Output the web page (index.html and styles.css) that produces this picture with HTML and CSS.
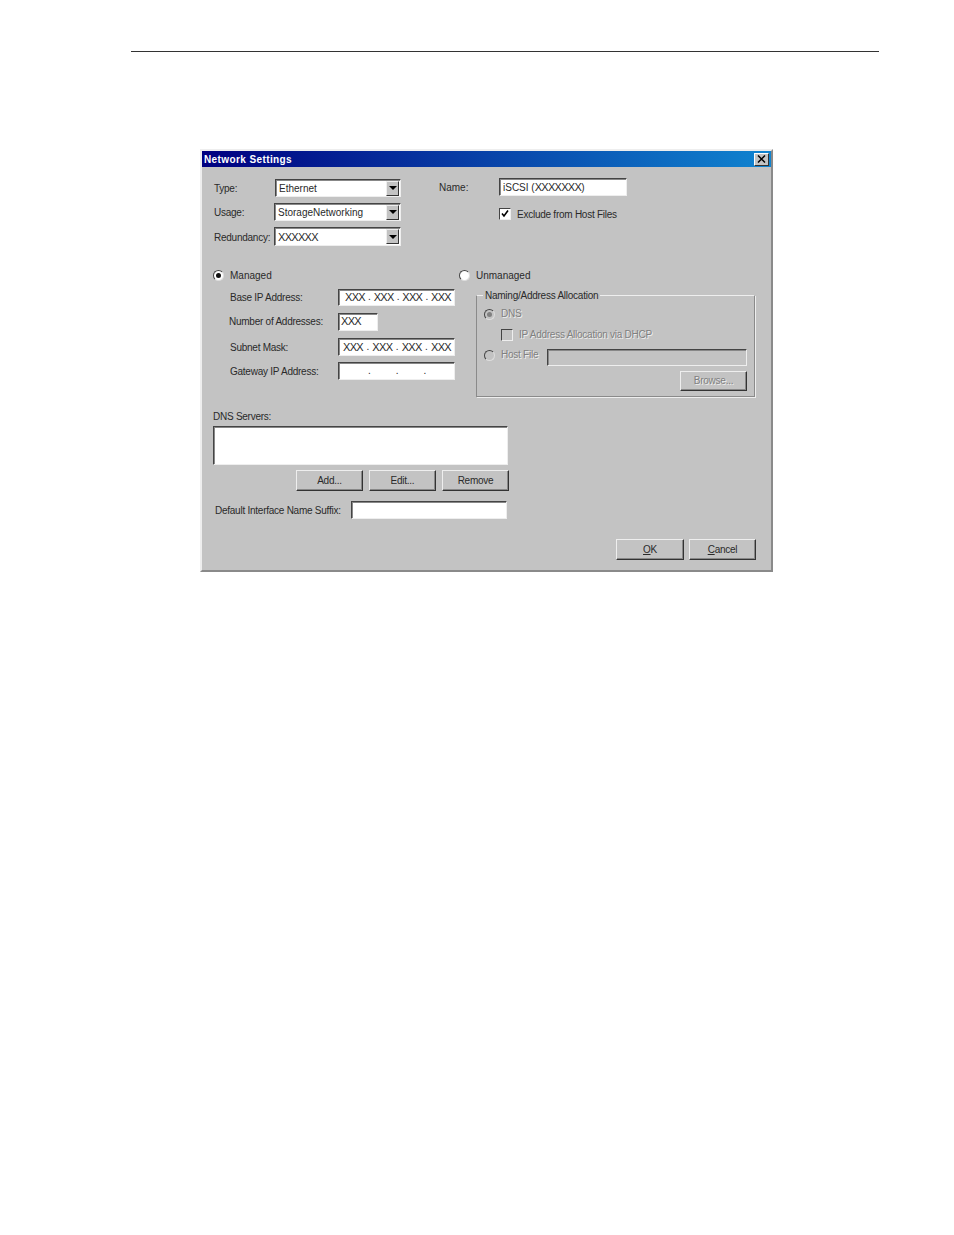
FILE: index.html
```html
<!DOCTYPE html>
<html lang="en">
<head>
    <meta charset="UTF-8">
    <title>Network Settings</title>
    <link rel="stylesheet" href="styles.css">
</head>
<body>
    <div class="page-rule"></div>

    <div class="dialog">
        <div class="titlebar">
            <span class="title">Network Settings</span>
            <span class="close">
                <svg width="9" height="8" viewBox="0 0 9 8"><path d="M1 0.5L8 7.5M8 0.5L1 7.5" fill="none" stroke="#000" stroke-width="1.5"/></svg>
            </span>
        </div>

        <div class="top">
            <div class="top-left">
                <div class="select-row">
                    <span class="select-label">Type:</span>
                    <div class="field select select-type"><span class="select-value">Ethernet</span><span class="arrow"></span></div>
                </div>
                <div class="select-row">
                    <span class="select-label">Usage:</span>
                    <div class="field select"><span class="select-value">StorageNetworking</span><span class="arrow"></span></div>
                </div>
                <div class="select-row select-row-tall">
                    <span class="select-label">Redundancy:</span>
                    <div class="field select"><span class="select-value masked">XXXXXX</span><span class="arrow"></span></div>
                </div>
            </div>
            <div class="top-right">
                <div class="name-row">
                    <span class="name-label">Name:</span>
                    <div class="field name-input">iSCSI (<span class="masked">XXXXXXX</span>)</div>
                </div>
                <div class="check-row">
                    <span class="checkbox">
                        <svg width="8" height="8" viewBox="0 0 8 8"><path d="M1 3.5L3 6 7 0.5" fill="none" stroke="#000" stroke-width="1.6"/></svg>
                    </span>
                    <span class="check-text">Exclude from Host Files</span>
                </div>
            </div>
        </div>

        <div class="mode-row">
            <div class="radio-item radio-managed"><span class="radio checked"></span><span class="mode-text">Managed</span></div>
            <div class="radio-item"><span class="radio"></span><span class="mode-text">Unmanaged</span></div>
        </div>

        <div class="middle">
            <div class="ip-fields">
                <div class="ip-row ip-base">
                    <span>Base IP Address:</span>
                    <div class="field ip-input ip-indent"><span class="masked">XXX</span><i>.</i><span class="masked">XXX</span><i>.</i><span class="masked">XXX</span><i>.</i><span class="masked">XXX</span></div>
                </div>
                <div class="ip-row ip-count">
                    <span>Number of Addresses:</span>
                    <div class="field count-input"><span class="masked">XXX</span></div>
                </div>
                <div class="ip-row ip-subnet">
                    <span>Subnet Mask:</span>
                    <div class="field ip-input"><span class="masked">XXX</span><i>.</i><span class="masked">XXX</span><i>.</i><span class="masked">XXX</span><i>.</i><span class="masked">XXX</span></div>
                </div>
                <div class="ip-row ip-gateway">
                    <span>Gateway IP Address:</span>
                    <div class="field ip-input ip-empty"><i>.</i><i>.</i><i>.</i></div>
                </div>
            </div>

            <fieldset class="group">
                <legend>Naming/Address Allocation</legend>
                <div class="radio-item disabled dns-row"><span class="radio checked"></span><span>DNS</span></div>
                <div class="dhcp-row disabled"><span class="checkbox"></span><span>IP Address Allocation via DHCP</span></div>
                <div class="host-row disabled">
                    <div class="radio-item"><span class="radio"></span><span>Host File</span></div>
                    <div class="field host-input"></div>
                </div>
                <div class="browse-row">
                    <div class="btn btn-disabled">Browse...</div>
                </div>
            </fieldset>
        </div>

        <div class="dns-label">DNS Servers:</div>
        <div class="field dns-list"></div>
        <div class="dns-buttons">
            <div class="btn">Add...</div>
            <div class="btn">Edit...</div>
            <div class="btn">Remove</div>
        </div>

        <div class="suffix-row">
            <span>Default Interface Name Suffix:</span>
            <div class="field suffix-input"></div>
        </div>

        <div class="dialog-buttons">
            <div class="btn btn-ok"><u>O</u>K</div>
            <div class="btn"><u>C</u>ancel</div>
        </div>
    </div>
</body>
</html>
```

FILE: styles.css
```css
body {
    margin: 0;
    background-color: white;
    font-family: "Liberation Sans", Arial, sans-serif;
    font-size: 10px;
    letter-spacing: -0.25px;
    color: #2a2a2a;
}
.page-rule {
    height: 1px;
    margin: 51px 75px 0 131px;
    background-color: #333;
}
.dialog {
    box-sizing: border-box;
    width: 573px;
    height: 423px;
    margin: 97px 0 0 200px;
    background-color: #c3c3c3;
    border: 2px solid;
    border-color: #eee #8a8a8a #8a8a8a #eee;
    line-height: 12px;
}
.titlebar {
    display: flex;
    justify-content: space-between;
    align-items: center;
    height: 16px;
    padding: 0 2px;
    background: linear-gradient(to right, #000080, #1084d0);
}
.title {
    padding-top: 2px;
    color: white;
    font-weight: bold;
    letter-spacing: 0.4px;
}
.close {
    display: flex;
    align-items: center;
    justify-content: center;
    box-sizing: border-box;
    width: 15px;
    height: 13px;
    background-color: #c3c3c3;
    border: 1px solid;
    border-color: #fff #333 #333 #fff;
}

/* sunken white box */
.field {
    box-sizing: border-box;
    background-color: white;
    border: 1px solid;
    border-color: #444 #eee #eee #444;
    box-shadow: inset 1px 1px 0 #888;
    white-space: nowrap;
    overflow: hidden;
}
/* the blanked-out values are chains of touching X's */
.masked {
    font-size: 11px;
    letter-spacing: -0.7px;
}

.top {
    display: flex;
    margin-top: 12px;
}
.top-left {
    width: 225px;
    margin-left: 12px;
}
.select-row {
    display: flex;
    align-items: center;
    height: 18px;
    margin-bottom: 6px;
}
.select-row-tall {
    height: 19px;
    margin-bottom: 0;
}
.select-label {
    width: 60px;
    padding-top: 2px;
}
.select {
    display: flex;
    justify-content: space-between;
    align-items: center;
    width: 127px;
    height: 100%;
    padding: 0 1px 0 3px;
}
.select-type {
    width: 126px;
    margin-left: 1px;
}
.select-value {
    padding-top: 2px;
    letter-spacing: 0;
}
.select-value.masked {
    padding-top: 0;
    letter-spacing: -0.7px;
}
.arrow {
    display: flex;
    align-items: center;
    justify-content: center;
    box-sizing: border-box;
    width: 13px;
    height: 15px;
    background-color: #c3c3c3;
    border: 1px solid;
    border-color: #eee #333 #333 #eee;
}
.arrow::before {
    content: "";
    border-style: solid;
    border-width: 4px 4px 0;
    border-color: #000 transparent transparent;
}
.top-right {
    margin-top: -1px;
}
.name-row {
    display: flex;
    align-items: center;
    height: 18px;
}
.name-label {
    width: 60px;
    padding-top: 2px;
    letter-spacing: 0;
}
.name-input {
    width: 128px;
    height: 18px;
    padding: 2px 3px 0;
    letter-spacing: 0;
}
.check-row {
    display: flex;
    align-items: center;
    gap: 6px;
    margin: 10px 0 0 60px;
}
.check-text {
    padding-top: 3px;
}
.checkbox {
    display: flex;
    align-items: center;
    justify-content: center;
    box-sizing: border-box;
    width: 12px;
    height: 12px;
    background-color: white;
    border: 1px solid;
    border-color: #444 #eee #eee #444;
}

.mode-row {
    display: flex;
    margin: 22px 0 0 11px;
}
.mode-text {
    padding-top: 2px;
    letter-spacing: 0;
}
.radio-item {
    display: flex;
    align-items: center;
    gap: 6px;
}
.radio-managed {
    width: 246px;
}
.radio {
    display: flex;
    align-items: center;
    justify-content: center;
    box-sizing: border-box;
    width: 11px;
    height: 11px;
    border-radius: 50%;
    background-color: white;
    border: 1px solid;
    border-color: #444 #ddd #ddd #444;
}
.radio.checked::before {
    content: "";
    width: 5px;
    height: 5px;
    border-radius: 50%;
    background-color: #111;
}

.middle {
    display: flex;
    margin-top: 7px;
}
.ip-fields {
    width: 246px;
    margin-left: 28px;
}
.ip-row {
    display: flex;
    align-items: center;
    height: 18px;
    white-space: nowrap;
}
.ip-row > span {
    width: 108px;
}
.ip-base {
    height: 17px;
}
.ip-count {
    margin-top: 7px;
}
.ip-count > span {
    margin-left: -1px;
    width: 109px;
}
.ip-subnet {
    margin-top: 7px;
}
.ip-subnet > span,
.ip-gateway > span {
    padding-top: 2px;
}
.ip-gateway {
    margin-top: 6px;
}
.ip-input {
    display: flex;
    justify-content: space-between;
    align-items: center;
    width: 117px;
    height: 100%;
    padding: 0 3px 1px 4px;
}
.ip-indent {
    padding-left: 6px;
}
.ip-empty {
    padding: 0 28px 0 29px;
}
.ip-input i {
    font-style: normal;
}
.count-input {
    width: 40px;
    height: 100%;
    padding: 1px 2px;
}

.group {
    box-sizing: border-box;
    width: 279px;
    height: 109px;
    margin: -1px 0 0;
    padding: 0;
    border: 1px solid #8a8a8a;
    border-top-color: #eee;
    box-shadow: 1px 1px 0 #eee;
}
.group legend {
    margin: 0 0 -1px 6px;
    padding: 2px 2px 0;
    line-height: 12px;
}
.disabled {
    color: #808080;
    text-shadow: 1px 1px 0 #eee;
}
.disabled .checkbox {
    background-color: #c3c3c3;
}
.disabled .radio {
    background-color: #c3c3c3;
}
.disabled .radio.checked::before {
    background-color: #808080;
}
.dns-row {
    margin: 7px 0 0 7px;
}
.dhcp-row {
    display: flex;
    align-items: center;
    gap: 6px;
    margin: 9px 0 0 24px;
}
.host-row {
    display: flex;
    align-items: flex-start;
    justify-content: space-between;
    height: 17px;
    margin: 8px 7px 0 7px;
}
.host-input {
    width: 200px;
    height: 17px;
    background-color: #c3c3c3;
}
.browse-row {
    display: flex;
    justify-content: flex-end;
    margin: 5px 7px 0 0;
}

.btn {
    display: flex;
    align-items: center;
    justify-content: center;
    box-sizing: border-box;
    width: 67px;
    height: 21px;
    border: 1px solid;
    border-color: #eee #333 #333 #eee;
    box-shadow: inset -1px -1px 0 #888;
}
.btn-disabled {
    width: 67px;
    height: 20px;
    color: #808080;
    text-shadow: 1px 1px 0 #eee;
}
.btn-ok {
    width: 68px;
}

.dns-label {
    margin: 14px 0 0 11px;
}
.dns-list {
    width: 295px;
    height: 39px;
    margin: 3px 0 0 11px;
}
.dns-buttons {
    display: flex;
    justify-content: flex-end;
    gap: 6px;
    width: 296px;
    margin: 5px 0 0 11px;
}
.suffix-row {
    display: flex;
    align-items: center;
    height: 18px;
    margin: 10px 0 0 13px;
}
.suffix-row > span {
    width: 136px;
    padding-top: 2px;
    white-space: nowrap;
}
.suffix-input {
    width: 156px;
    height: 18px;
}
.dialog-buttons {
    display: flex;
    justify-content: flex-end;
    gap: 5px;
    margin: 20px 15px 0 0;
}
```
